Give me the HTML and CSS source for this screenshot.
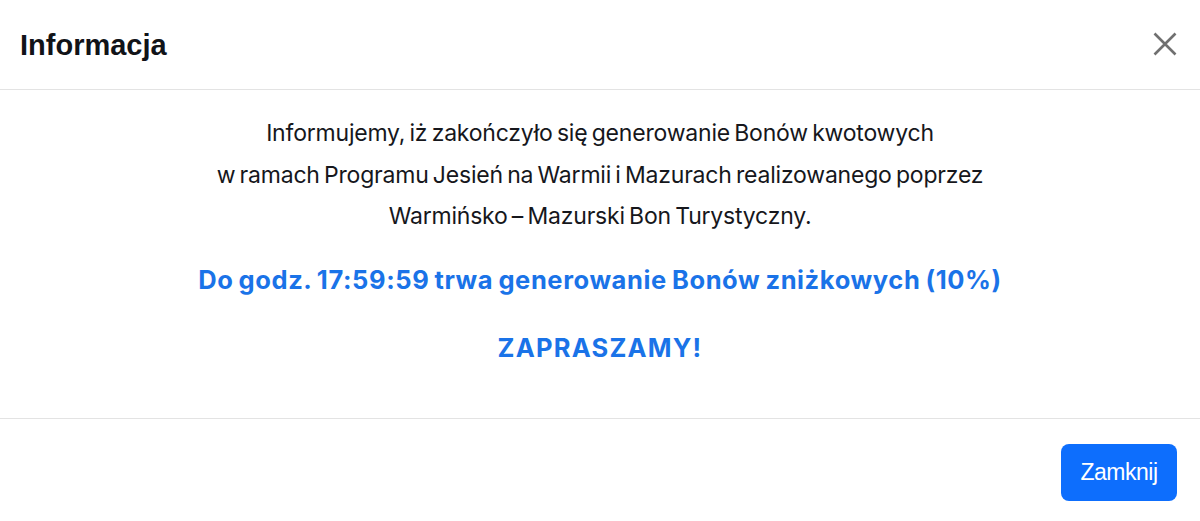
FILE: index.html
```html
<!DOCTYPE html>
<html lang="pl">
<head>
<meta charset="utf-8">
<title>Informacja</title>
<link rel="stylesheet" href="styles.css">
</head>
<body>
<div class="modal">
  <div class="modal-header">
    <h5 class="modal-title">Informacja</h5>
    <button class="btn-close" aria-label="Close">
      <svg viewBox="0 0 24 24" width="24" height="24"><path d="M1.5 1.5 L22.5 22.5 M22.5 1.5 L1.5 22.5" stroke="#707070" stroke-width="2.6" fill="none"/></svg>
    </button>
  </div>
  <div class="modal-body">
    <p class="info">Informujemy, iż zakończyło się generowanie Bonów kwotowych<br>w ramach Programu Jesień na Warmii i Mazurach realizowanego poprzez<br>Warmińsko – Mazurski Bon Turystyczny.</p>
    <p class="highlight">Do godz. 17:59:59 trwa generowanie Bonów zniżkowych (10%)</p>
    <p class="highlight invite">ZAPRASZAMY!</p>
  </div>
  <div class="modal-footer">
    <button class="btn-primary">Zamknij</button>
  </div>
</div>
</body>
</html>
```
FILE: styles.css
```css
html, body {
  margin: 0;
  padding: 0;
  background: #fff;
}
.modal {
  width: 1200px;
  height: 521px;
  display: flex;
  flex-direction: column;
}
.modal-header {
  height: 89px;
  border-bottom: 1px solid #e3e3e3;
  display: flex;
  align-items: center;
  justify-content: space-between;
  padding: 0 23px 0 20px;
  box-sizing: content-box;
}
.modal-title {
  margin: 0;
  font-family: "Liberation Sans", Arial, sans-serif;
  font-weight: 700;
  font-size: 29px;
  color: #111318;
  letter-spacing: 0;
  padding-top: 1px;
}
.btn-close {
  border: 0;
  background: none;
  padding: 0;
  width: 24px;
  height: 24px;
  display: flex;
  margin-top: -2px;
}
.modal-body {
  height: 329px;
  border-bottom: 1px solid #e3e3e3;
  text-align: center;
  font-family: Inter, "Noto Sans", sans-serif;
  padding-top: 23px;
  box-sizing: border-box;
}
.info {
  margin: 0;
  font-size: 23px;
  line-height: 41.5px;
  letter-spacing: -0.2px;
  word-spacing: -2px;
  color: #16171c;
}
.highlight {
  margin: 21px 0 0;
  font-size: 25.5px;
  line-height: 41px;
  font-weight: 700;
  letter-spacing: 0.6px;
  word-spacing: -1.5px;
  color: #1a73e8;
}
.invite {
  margin-top: 27px;
  font-size: 25.5px;
  letter-spacing: 1.2px;
}
.modal-footer {
  flex: 1;
  display: flex;
  justify-content: flex-end;
  align-items: flex-start;
  padding: 25px 23px 0 0;
}
.btn-primary {
  width: 116px;
  height: 57px;
  border: 0;
  border-radius: 8px;
  background: #0d6efd;
  color: #fff;
  font-family: "Liberation Sans", Arial, sans-serif;
  font-size: 23px;
  letter-spacing: -0.5px;
  padding: 0;
}
```
